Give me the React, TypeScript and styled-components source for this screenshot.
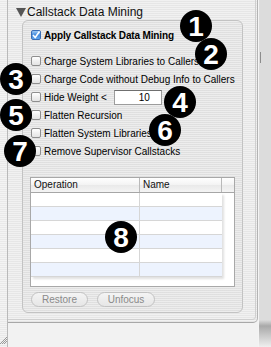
import styled, { createGlobalStyle } from "styled-components";

const GlobalStyle = createGlobalStyle`
  html, body {
    margin: 0;
    padding: 0;
  }
  body {
    width: 271px;
    height: 347px;
    overflow: hidden;
    font-family: "Liberation Sans", Arial, sans-serif;
    background: #f4f4f4;
  }
`;

const stripes = `repeating-linear-gradient(
  to bottom,
  rgba(255, 255, 255, 0.35) 0px,
  rgba(255, 255, 255, 0.35) 1px,
  rgba(0, 0, 0, 0.015) 1px,
  rgba(0, 0, 0, 0.015) 2px
)`;

const Page = styled.div`
  position: relative;
  width: 271px;
  height: 347px;
  display: flex;
  overflow: hidden;
`;

const LeftStrip = styled.div`
  width: 7px;
  border-right: 1px solid #b9b9b9;
  background: ${stripes}, #ededed;
  position: relative;
`;

const Grip = styled.svg`
  position: absolute;
  left: 0;
  bottom: 2px;
`;

const Middle = styled.div`
  width: 250px;
  display: flex;
  flex-direction: column;
  background: linear-gradient(to bottom, #a9a9a9 0px, #d4d4d4 8px, #f2f2f2 20px);
`;

const Drawer = styled.div`
  height: 323px;
  box-sizing: border-box;
  background: ${stripes}, #eaeaea;
  border-right: 1px solid #b4b4b4;
  border-bottom: 1px solid #a8a8a8;
  border-bottom-right-radius: 5px;
  padding: 0 2px 2px 0;
  display: flex;
`;

const Frame = styled.div`
  flex: 1;
  box-sizing: border-box;
  border-right: 1px solid #d0d0d0;
  border-bottom: 1px solid #cfcfcf;
  border-bottom-right-radius: 4px;
  padding: 4px 12px 4px 7px;
  display: flex;
  flex-direction: column;
`;

const RightStrip = styled.div`
  flex: 1;
  background: linear-gradient(to bottom, #dcdcdc 0px, #dcdcdc 320px, #a9a9a9 326px, #efefef 347px);
  border-left: 1px solid #f4f4f4;
  position: relative;
`;

const Splitter = styled.div`
  position: absolute;
  left: 1px;
  top: 52px;
  width: 1px;
  height: 11px;
  background: #8c8c8c;
`;

const Disclosure = styled.div`
  display: flex;
  align-items: center;
  height: 16px;
  gap: 1px;
  font-size: 12px;
  color: #111;
`;

const Triangle = styled.span`
  width: 0;
  height: 0;
  border-left: 5px solid transparent;
  border-right: 5px solid transparent;
  border-top: 9px solid #555;
  margin-left: 1px;
`;

const GroupBox = styled.div`
  margin: 0 0 0 7px;
  height: 293px;
  box-sizing: border-box;
  border: 1px solid #c3c3c3;
  border-radius: 6px;
  background: ${stripes}, #e3e3e3;
  padding: 5px 7px 0 7px;
  display: flex;
  flex-direction: column;
`;

const OptionRow = styled.label<{ $gapTop?: number }>`
  display: flex;
  align-items: center;
  height: 18px;
  gap: 3px;
  margin-top: ${({ $gapTop }) => $gapTop ?? 0}px;
  font-size: 10px;
  color: #000;
`;

const Box = styled.span<{ $checked?: boolean }>`
  width: 10px;
  height: 10px;
  box-sizing: border-box;
  margin-left: 1px;
  border-radius: 2px;
  border: 1px solid ${({ $checked }) => ($checked ? "#3a6db5" : "#8e8e8e")};
  background: ${({ $checked }) =>
    $checked
      ? "linear-gradient(to bottom, #9ecbf6, #3e86da 50%, #62a7ee)"
      : "linear-gradient(to bottom, #ffffff, #f0f0f0 50%, #e4e4e4)"};
  display: flex;
  align-items: center;
  justify-content: center;
`;

const LabelText = styled.span<{ $bold?: boolean }>`
  font-weight: ${({ $bold }) => ($bold ? 700 : 400)};
  letter-spacing: ${({ $bold }) => ($bold ? "-0.15px" : "0")};
  white-space: nowrap;
`;

const NumberField = styled.div`
  width: 48px;
  height: 15px;
  box-sizing: border-box;
  margin-left: 4px;
  border: 1px solid #9c9c9c;
  border-top-color: #6f6f6f;
  background: #fff;
  text-align: right;
  padding-right: 11px;
  line-height: 13px;
  font-size: 10px;
`;

const Table = styled.div`
  margin-top: 17px;
  height: 110px;
  box-sizing: border-box;
  border: 1px solid #a8a8a8;
  background: #fff;
  display: flex;
  flex-direction: column;
`;

const HeaderRow = styled.div`
  display: grid;
  grid-template-columns: 109px 82px 1fr;
  height: 15px;
  box-sizing: border-box;
  border-bottom: 1px solid #a6a6a6;
  background: linear-gradient(to bottom, #ffffff, #f3f3f3 50%, #e9e9e9 51%, #f4f4f4);
  font-size: 10px;
`;

const HeaderCell = styled.div<{ $last?: boolean }>`
  padding-left: 3px;
  line-height: 14px;
  border-right: ${({ $last }) => ($last ? "none" : "1px solid #b9b9b9")};
  color: #111;
`;

const Rows = styled.div`
  width: 191px;
  box-shadow: 2px 2px 2px rgba(0, 0, 0, 0.12);
`;

const Row = styled.div<{ $alt: boolean }>`
  display: grid;
  grid-template-columns: 109px 1fr;
  height: 14px;
  box-sizing: border-box;
  border-bottom: 1px solid #d6d6d6;
  background: ${({ $alt }) => ($alt ? "#edf3fe" : "#ffffff")};
`;

const Cell = styled.div`
  border-right: 1px solid #d6d6d6;
  &:last-child {
    border-right: none;
  }
`;

const ButtonBar = styled.div`
  display: flex;
  gap: 9px;
  margin-top: 5px;
  padding-left: 1px;
`;

const PillButton = styled.div<{ $w: number }>`
  width: ${({ $w }) => $w}px;
  height: 15px;
  box-sizing: border-box;
  border: 1px solid #c2c2c2;
  border-radius: 8px;
  background: linear-gradient(to bottom, #f4f4f4, #e6e6e6);
  color: #8a8a8a;
  font-size: 10px;
  line-height: 13px;
  text-align: center;
`;

const Badge = styled.div<{ $x: number; $y: number }>`
  position: absolute;
  left: ${({ $x }) => $x - 16}px;
  top: ${({ $y }) => $y - 16}px;
  width: 32px;
  height: 32px;
  border-radius: 50%;
  background: #000;
  color: #fff;
  font-family: "Liberation Sans", Arial, sans-serif;
  font-weight: 700;
  font-size: 28px;
  line-height: 33px;
  text-align: center;
`;

const options = [
  { label: "Charge System Libraries to Callers" },
  { label: "Charge Code without Debug Info to Callers" },
  { label: "Hide Weight <", field: "10" },
  { label: "Flatten Recursion" },
  { label: "Flatten System Libraries" },
  { label: "Remove Supervisor Callstacks" },
];

const badges = [
  { n: 1, x: 196, y: 26 },
  { n: 2, x: 211, y: 54 },
  { n: 3, x: 16, y: 79 },
  { n: 4, x: 180, y: 102 },
  { n: 5, x: 16, y: 115 },
  { n: 6, x: 165, y: 130 },
  { n: 7, x: 20, y: 151 },
  { n: 8, x: 121, y: 237 },
];

export default function App() {
  return (
    <>
      <GlobalStyle />
      <Page>
        <LeftStrip>
          <Grip width="8" height="12" viewBox="0 0 8 12">
            <path d="M0 11 L7 4 M2 11 L7 6 M4 11 L7 8" stroke="#9a9a9a" strokeWidth="1" fill="none" />
          </Grip>
        </LeftStrip>
        <Middle>
          <Drawer>
            <Frame>
              <Disclosure>
                <Triangle />
                Callstack Data Mining
              </Disclosure>
              <GroupBox>
                <OptionRow>
                  <Box $checked>
                    <svg width="8" height="8" viewBox="0 0 8 8">
                      <path d="M1 4 L3.2 6.5 L7.5 0.5" stroke="#fff" strokeWidth="1.6" fill="none" />
                    </svg>
                  </Box>
                  <LabelText $bold>Apply Callstack Data Mining</LabelText>
                </OptionRow>
                {options.map((o, i) => (
                  <OptionRow key={o.label} $gapTop={i === 0 ? 8 : 0}>
                    <Box />
                    <LabelText>{o.label}</LabelText>
                    {o.field && <NumberField>{o.field}</NumberField>}
                  </OptionRow>
                ))}
                <Table>
                  <HeaderRow>
                    <HeaderCell>Operation</HeaderCell>
                    <HeaderCell>Name</HeaderCell>
                    <HeaderCell $last />
                  </HeaderRow>
                  <Rows>
                    {[0, 1, 2, 3, 4, 5].map((r) => (
                      <Row key={r} $alt={r % 2 === 1}>
                        <Cell />
                        <Cell />
                      </Row>
                    ))}
                  </Rows>
                </Table>
                <ButtonBar>
                  <PillButton $w={57}>Restore</PillButton>
                  <PillButton $w={58}>Unfocus</PillButton>
                </ButtonBar>
              </GroupBox>
            </Frame>
          </Drawer>
        </Middle>
        <RightStrip>
          <Splitter />
        </RightStrip>
        {badges.map((b) => (
          <Badge key={b.n} $x={b.x} $y={b.y}>
            {b.n}
          </Badge>
        ))}
      </Page>
    </>
  );
}
